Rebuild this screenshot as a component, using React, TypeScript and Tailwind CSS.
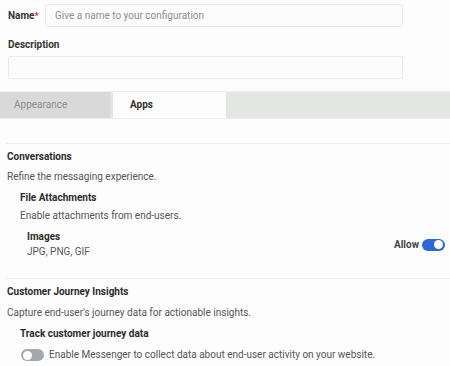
import React from 'react';

const Toggle: React.FC<{ on: boolean }> = ({ on }) => (
  <span
    className={`inline-flex h-[12px] w-[23px] shrink-0 items-center rounded-full px-[2px] ${
      on ? 'bg-[#2f66d6] justify-end' : 'bg-[#a3a8af] justify-start'
    }`}
  >
    <span className="h-[9px] w-[9px] rounded-full bg-white" />
  </span>
);

export default function App() {
  return (
    <div className="w-[450px] h-[366px] overflow-hidden bg-[#fdfdfd] text-[10px] leading-[14px] text-[#555] font-['Roboto',sans-serif]">
      <div className="pl-[8px] pt-[4px]">
        <div className="flex items-center">
          <label className="w-[37px] font-bold text-[#333]">
            Name<span className="align-top text-[9px] text-[#d32f2f]">*</span>
          </label>
          <div className="flex h-[23px] w-[358px] items-center rounded-[2px] border border-[#e6e9ef] bg-[#fcfcfc] px-[9px] text-[#8a8d92]">
            Give a name to your configuration
          </div>
        </div>
        <div className="mt-[11px] font-bold text-[#333]">Description</div>
        <div className="mt-[4px] h-[23px] w-[395px] rounded-[2px] border border-[#e6e9ef] bg-[#fcfcfc]" />
      </div>

      <div className="mt-[12px] flex h-[28px] border-y border-[#eeeeee] bg-[#e4e6e4]">
        <div className="flex w-[110px] items-center bg-[#d9d9d9] pl-[14px] text-[#8c8c8c]">Appearance</div>
        <div className="ml-[3px] flex w-[113px] items-center bg-[#fdfdfd] pl-[17px] font-bold text-[#333]">Apps</div>
      </div>

      <div className="pl-[6px] pt-[24px]">
        <div className="border-t border-[#eceef1]" />
        <div className="pl-px pt-[6px]">
          <div className="font-bold text-[#2b2b2b]">Conversations</div>
          <div className="mt-[6px]">Refine the messaging experience.</div>
          <div className="pl-[13px]">
            <div className="mt-[7px] font-bold text-[#2b2b2b]">File Attachments</div>
            <div className="mt-[4px]">Enable attachments from end-users.</div>
            <div className="mt-[7px] flex items-center pl-[7px] pr-[5px]">
              <div className="flex-1">
                <div className="font-bold text-[#2b2b2b]">Images</div>
                <div className="mt-px">JPG, PNG, GIF</div>
              </div>
              <div className="flex items-center gap-[3px]">
                <span className="font-bold text-[#444]">Allow</span>
                <Toggle on />
              </div>
            </div>
          </div>
        </div>
        <div className="mt-[19px] border-t border-[#eceef1]" />
        <div className="pl-px pt-[6px]">
          <div className="font-bold text-[#2b2b2b]">Customer Journey Insights</div>
          <div className="mt-[7px]">Capture end-user's journey data for actionable insights.</div>
          <div className="pl-[13px]">
            <div className="mt-[7px] font-bold text-[#2b2b2b]">Track customer journey data</div>
            <div className="mt-[7px] flex items-center gap-[5px] pl-px">
              <Toggle on={false} />
              <span>Enable Messenger to collect data about end-user activity on your website.</span>
            </div>
          </div>
        </div>
      </div>
    </div>
  );
}
